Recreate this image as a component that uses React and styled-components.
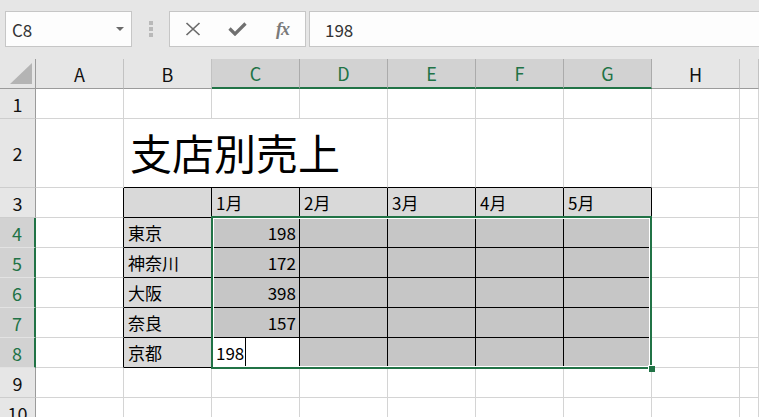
import React from 'react'
import styled, { createGlobalStyle } from 'styled-components'

const GREEN = '#217346'
const GRID = '#d4d4d4'
const BLACK = '#000'

const GlobalStyle = createGlobalStyle`
  html, body {
    margin: 0;
    padding: 0;
    background: #fff;
    font-family: "Noto Sans CJK JP", "Noto Sans", sans-serif;
    overflow: hidden;
  }
`

const Page = styled.div`
  width: 759px;
  height: 417px;
  overflow: hidden;
  background: #fff;
`

const Toolbar = styled.div`
  height: 59px;
  box-sizing: border-box;
  background: #e6e6e6;
  display: flex;
  align-items: flex-start;
  padding: 11px 0 0 5px;
`

const NameBox = styled.div`
  width: 127px;
  height: 36px;
  box-sizing: border-box;
  background: #fdfdfd;
  border: 1px solid #c6c6c6;
  display: flex;
  align-items: center;
  justify-content: space-between;
  padding: 0 7px 0 6px;
  font-size: 17px;
  color: #333;
`

const DropArrow = styled.span`
  width: 0;
  height: 0;
  border-left: 4px solid transparent;
  border-right: 4px solid transparent;
  border-top: 4px solid #6a6a6a;
`

const Grip = styled.div`
  width: 37px;
  height: 36px;
  display: flex;
  flex-direction: column;
  align-items: center;
  justify-content: center;
  gap: 2px;
`

const Dot = styled.span`
  width: 4px;
  height: 4px;
  background: #b9b9b9;
`

const FuncBox = styled.div`
  width: 137px;
  height: 36px;
  box-sizing: border-box;
  background: #fdfdfd;
  border: 1px solid #c6c6c6;
  display: flex;
  align-items: center;
`

const FuncSlot = styled.div`
  width: 45px;
  height: 100%;
  display: flex;
  align-items: center;
  justify-content: center;
`

const Fx = styled.span`
  font-family: "Liberation Serif", "DejaVu Serif", serif;
  font-style: italic;
  font-weight: bold;
  font-size: 18px;
  color: #7a7a7a;
  letter-spacing: -1px;
`

const FormulaBar = styled.div`
  flex: 1;
  height: 36px;
  margin-left: 3px;
  margin-right: -2px;
  box-sizing: border-box;
  background: #fdfdfd;
  border: 1px solid #c6c6c6;
  display: flex;
  align-items: center;
  padding-left: 15px;
  font-size: 17px;
  color: #333;
`

const SheetWrap = styled.div`
  position: relative;
`

const Grid = styled.div`
  display: grid;
  grid-template-columns: 36px repeat(8, 88px) 1fr;
  grid-template-rows: 30px 30px 69px repeat(8, 30px);
`

const Corner = styled.div`
  box-sizing: border-box;
  background: #e6e6e6;
  border-right: 1px solid #9b9b9b;
  border-bottom: 1px solid #9b9b9b;
  display: flex;
  align-items: flex-end;
  justify-content: flex-end;
  padding: 0 3px 4px 0;
`

const Triangle = styled.div`
  width: 22px;
  height: 21px;
  background: #b4b4b4;
  clip-path: polygon(100% 0, 100% 100%, 0 100%);
`

const ColHead = styled.div`
  box-sizing: border-box;
  background: ${p => (p.$sel ? '#d2d2d2' : '#e6e6e6')};
  color: ${p => (p.$sel ? GREEN : '#111')};
  border-right: 1px solid ${p => (p.$sel ? '#ababab' : '#c2c2c2')};
  border-bottom: ${p => (p.$sel ? `2px solid ${GREEN}` : '1px solid #9b9b9b')};
  display: flex;
  align-items: center;
  justify-content: center;
  font-size: 18px;
`

const RowHead = styled.div`
  box-sizing: border-box;
  background: ${p => (p.$sel ? '#d2d2d2' : '#e6e6e6')};
  color: ${p => (p.$sel ? GREEN : '#111')};
  border-right: ${p => (p.$sel ? `2px solid ${GREEN}` : '1px solid #9b9b9b')};
  border-bottom: 1px solid ${p => (p.$sel ? '#e2e2e2' : '#cdcdcd')};
  display: flex;
  align-items: center;
  justify-content: center;
  font-size: 18px;
`

const Cell = styled.div`
  box-sizing: border-box;
  grid-column: ${p => (p.$span ? `span ${p.$span}` : 'auto')};
  background: ${p => p.$bg || 'transparent'};
  border-right: 1px solid ${p => p.$r || GRID};
  border-bottom: 1px solid ${p => p.$b || GRID};
  display: flex;
  align-items: center;
  justify-content: ${p => (p.$num ? 'flex-end' : 'flex-start')};
  padding: ${p => (p.$num ? '0 3px 0 0' : '0 0 0 4px')};
  font-size: 17px;
  color: #000;
  white-space: nowrap;
  overflow: hidden;
`

const Title = styled(Cell)`
  font-size: 42px;
  padding-left: 6px;
  padding-bottom: 4px;
`

const EditCell = styled(Cell)`
  align-items: stretch;
`

const EditText = styled.span`
  align-self: center;
`

const Caret = styled.span`
  width: 1px;
  margin-left: 1px;
  background: #000;
`

const Selection = styled.div`
  position: absolute;
  left: 211px;
  top: 157px;
  width: 441px;
  height: 153px;
  box-sizing: border-box;
  border: 2px solid ${GREEN};
  box-shadow: inset 0 0 0 1px #fff;
  pointer-events: none;
`

const FillHandle = styled.div`
  position: absolute;
  right: -5px;
  bottom: -5px;
  width: 6px;
  height: 6px;
  background: ${GREEN};
  border-top: 1px solid #fff;
  border-left: 1px solid #fff;
`

const cols = ['A', 'B', 'C', 'D', 'E', 'F', 'G', 'H', '']
const branches = [
  ['東京', 198],
  ['神奈川', 172],
  ['大阪', 398],
  ['奈良', 157],
  ['京都', 198],
]
const months = ['1月', '2月', '3月', '4月', '5月']

function CrossIcon() {
  return (
    <svg width="16" height="14" viewBox="0 0 16 14">
      <path d="M1.5 1 L14.5 13 M14.5 1 L1.5 13" stroke="#6b6b6b" strokeWidth="1.7" fill="none" />
    </svg>
  )
}

function CheckIcon() {
  return (
    <svg width="19" height="14" viewBox="0 0 19 14">
      <path d="M1.5 6.5 L7 12 L17.5 1.5" stroke="#707070" strokeWidth="3.2" fill="none" />
    </svg>
  )
}

function renderRow(r) {
  const out = []
  const selRow = r >= 4 && r <= 8
  out.push(<RowHead key={`h${r}`} $sel={selRow}>{r}</RowHead>)

  if (r === 2) {
    out.push(<Cell key="A2" />)
    out.push(<Title key="B2" $span={3} $b={BLACK}>支店別売上</Title>)
    out.push(<Cell key="E2" $b={BLACK} />)
    out.push(<Cell key="F2" $b={BLACK} />)
    out.push(<Cell key="G2" $b={BLACK} />)
    out.push(<Cell key="H2" />)
    out.push(<Cell key="I2" />)
    return out
  }

  cols.forEach((c, i) => {
    const key = `${i}-${r}`
    const inTable = r >= 3 && r <= 8 && i >= 1 && i <= 6
    if (!inTable) {
      out.push(<Cell key={key} $r={r >= 3 && r <= 8 && i === 0 ? BLACK : undefined} />)
      return
    }
    if (r === 3) {
      out.push(
        <Cell key={key} $bg="#d9d9d9" $r={BLACK} $b={BLACK}>
          {i >= 2 ? months[i - 2] : ''}
        </Cell>
      )
      return
    }
    const [name, value] = branches[r - 4]
    if (i === 1) {
      out.push(<Cell key={key} $bg="#d9d9d9" $r={BLACK} $b={BLACK}>{name}</Cell>)
    } else if (i === 2 && r === 8) {
      out.push(
        <EditCell key={key} $bg="#fff" $r={BLACK} $b={BLACK}>
          <EditText>{value}</EditText>
          <Caret />
        </EditCell>
      )
    } else if (i === 2) {
      out.push(<Cell key={key} $bg="#c6c6c6" $r={BLACK} $b={BLACK} $num>{value}</Cell>)
    } else {
      out.push(<Cell key={key} $bg="#c6c6c6" $r={BLACK} $b={BLACK} />)
    }
  })
  return out
}

export default function App() {
  const rows = Array.from({ length: 10 }, (_, i) => i + 1)
  return (
    <Page>
      <GlobalStyle />
      <Toolbar>
        <NameBox>
          <span>C8</span>
          <DropArrow />
        </NameBox>
        <Grip>
          <Dot />
          <Dot />
          <Dot />
        </Grip>
        <FuncBox>
          <FuncSlot><CrossIcon /></FuncSlot>
          <FuncSlot><CheckIcon /></FuncSlot>
          <FuncSlot><Fx>fx</Fx></FuncSlot>
        </FuncBox>
        <FormulaBar>198</FormulaBar>
      </Toolbar>
      <SheetWrap>
        <Grid>
          <Corner><Triangle /></Corner>
          {cols.map((c, i) => (
            <ColHead key={`c${i}`} $sel={i >= 2 && i <= 6}>{c}</ColHead>
          ))}
          {rows.map(r => renderRow(r))}
        </Grid>
        <Selection>
          <FillHandle />
        </Selection>
      </SheetWrap>
    </Page>
  )
}
